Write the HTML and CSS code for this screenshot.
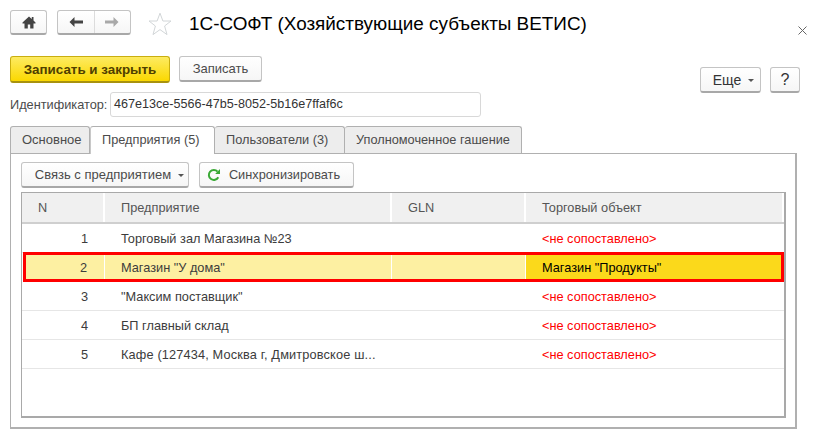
FILE: index.html
```html
<!DOCTYPE html>
<html lang="ru">
<head>
<meta charset="utf-8">
<title>1С-СОФТ</title>
<link rel="stylesheet" href="styles.css">
</head>
<body>
<div class="window">
  <header class="top">
    <button class="btn nav home" aria-label="Домой">
      <svg width="14" height="13" viewBox="0 0 14 13"><path d="M7 0.5 0.5 6.5V7.5H2.5V12.5H5.8V8.5H8.2V12.5H11.5V7.5H13.5V6.5L11.5 4.6V1H9.8V3L7 0.5Z" fill="#444"/></svg>
    </button>
    <div class="btn nav pair">
      <span class="seg"><svg width="14" height="10" viewBox="0 0 14 10"><path d="M5.5 0 0.5 5 5.5 10V6.5H14V3.5H5.5Z" fill="#444"/></svg></span>
      <span class="seg last"><svg width="14" height="10" viewBox="0 0 14 10"><path d="M8.5 0 13.5 5 8.5 10V6.5H0V3.5H8.5Z" fill="#a9a9a9"/></svg></span>
    </div>
    <svg class="star" width="24" height="24" viewBox="0 0 24 24"><path d="M12 1.2 14.9 9H23L16.6 14 19 22.6 12 17.6 5 22.6 7.4 14 1 9H9.1Z" fill="#fff" stroke="#d2d6d8" stroke-width="1"/></svg>
    <h1 class="title">1С-СОФТ (Хозяйствующие субъекты ВЕТИС)</h1>
    <svg class="close" width="9" height="9" viewBox="0 0 9 9"><path d="M.5.5 8.5 8.5M8.5.5.5 8.5" stroke="#666" stroke-width="1" fill="none"/></svg>
  </header>

  <div class="commands">
    <button class="btn primary">Записать и закрыть</button>
    <button class="btn save">Записать</button>
    <div class="cmd-right">
      <button class="btn more">Еще<i class="caret"></i></button>
      <button class="btn help">?</button>
    </div>
  </div>

  <div class="field">
    <label class="field-label">Идентификатор:</label>
    <div class="input">467e13ce-5566-47b5-8052-5b16e7ffaf6c</div>
  </div>

  <nav class="tabs">
    <div class="tab t1">Основное</div>
    <div class="tab t2 active">Предприятия (5)</div>
    <div class="tab t3">Пользователи (3)</div>
    <div class="tab t4">Уполномоченное гашение</div>
  </nav>

  <section class="panel">
    <div class="toolbar">
      <button class="btn link">Связь с предприятием<i class="caret"></i></button>
      <button class="btn sync">
        <svg width="14" height="14" viewBox="0 0 14 14"><path d="M11.3 9.2A5 5 0 1 1 10.6 3.6" fill="none" stroke="#3aa935" stroke-width="2"/><path d="M8.2 5.9H13V1Z" fill="#3aa935"/></svg>
        Синхронизировать
      </button>
    </div>
    <div class="table">
      <div class="row head">
        <div class="c c-n">N</div>
        <div class="c c-name">Предприятие</div>
        <div class="c c-gln">GLN</div>
        <div class="c c-obj">Торговый объект</div>
      </div>
      <div class="row">
        <div class="c c-n">1</div>
        <div class="c c-name">Торговый зал Магазина №23</div>
        <div class="c c-gln"></div>
        <div class="c c-obj none">&lt;не сопоставлено&gt;</div>
      </div>
      <div class="row selected">
        <div class="c c-n">2</div>
        <div class="c c-name">Магазин "У дома"</div>
        <div class="c c-gln"></div>
        <div class="c c-obj">Магазин "Продукты"</div>
      </div>
      <div class="row">
        <div class="c c-n">3</div>
        <div class="c c-name">"Максим поставщик"</div>
        <div class="c c-gln"></div>
        <div class="c c-obj none">&lt;не сопоставлено&gt;</div>
      </div>
      <div class="row">
        <div class="c c-n">4</div>
        <div class="c c-name">БП главный склад</div>
        <div class="c c-gln"></div>
        <div class="c c-obj none">&lt;не сопоставлено&gt;</div>
      </div>
      <div class="row">
        <div class="c c-n">5</div>
        <div class="c c-name long">Кафе (127434, Москва г, Дмитровское ш...</div>
        <div class="c c-gln"></div>
        <div class="c c-obj none">&lt;не сопоставлено&gt;</div>
      </div>
    </div>
  </section>
</div>
</body>
</html>
```
FILE: styles.css
```css
* { box-sizing: border-box; }
html, body { margin: 0; padding: 0; background: #fff; }
body { font: 12.75px "Liberation Sans", Arial, sans-serif; color: #4b4b4b; overflow: hidden; }
.window { width: 817px; height: 447px; padding: 10px 17px 0 10px; }

.btn {
  font: inherit; color: #4b4b4b; padding: 0; margin: 0;
  display: flex; align-items: center; justify-content: center;
  background: linear-gradient(#fff, #f6f6f6);
  border: 1px solid #c4c4c4; border-bottom: 2px solid #a8a8a8; border-radius: 3px;
}

.top { display: flex; align-items: flex-start; height: 46px; }
.nav { height: 25px; }
.home { width: 37px; }
.pair { width: 74px; margin-left: 10px; }
.seg { flex: 1; height: 100%; display: flex; align-items: center; justify-content: center; }
.seg.last { border-left: 1px solid #dcdcdc; }
.star { margin: 2px 0 0 17px; }
.title { font: 400 18.9px "Liberation Sans", Arial, sans-serif; color: #000; margin: 1px 0 0 17px; line-height: 26px; flex: 1; white-space: nowrap; }
.close { margin: 16px -7px 0 0; }

.commands { display: flex; align-items: flex-start; height: 36px; }
.primary { width: 160px; height: 27px; font-weight: 700; font-size: 13.4px; color: #4f3f00; background: linear-gradient(#fdeb62, #fbd800); border-color: #c9ae10; border-bottom-color: #a8920e; }
.save { width: 83px; height: 26px; margin-left: 9px; font-size: 13px; }
.cmd-right { display: flex; gap: 9px; margin-left: auto; margin-top: 11px; }
.more { width: 61px; height: 26px; color: #333; font-size: 14px; padding-left: 6px; }
.help { width: 30px; height: 26px; color: #333; font-size: 16px; }
.caret { width: 0; height: 0; border: 3px solid transparent; border-top-color: #555; border-bottom: 0; margin-left: 7px; margin-top: 1px; }

.field { display: flex; align-items: center; height: 25px; }
.field-label { width: 100px; color: #4b4b4b; }
.input { width: 371px; height: 25px; border: 1px solid #d8d8d8; border-radius: 3px; padding: 0 3px; line-height: 23px; color: #333; font-size: 12.6px; }

.tabs { display: flex; margin-top: 9px; height: 28px; position: relative; z-index: 1; }
.tab { height: 27px; line-height: 26px; padding-left: 11px; white-space: nowrap; background: #ededed; border: 1px solid #b0b0b0; border-bottom: 0; border-left: 0; border-radius: 3px 3px 0 0; }
.t1 { width: 80px; border-left: 1px solid #b0b0b0; font-size: 13px; }
.t2 { width: 125px; height: 28px; background: #fff; border-left: 1px solid #c8c8c8; }
.t3 { width: 130px; }
.t4 { width: 177px; }

.panel { width: 787px; height: 276px; margin-top: -1px; border: 1px solid #b0b0b0; border-width: 1px 2px 2px 1px; padding: 8px 10px 0 10px; }
.toolbar { display: flex; gap: 10px; height: 30px; }
.link { width: 168px; height: 26px; font-size: 13px; padding-left: 9px; }
.sync { width: 155px; height: 26px; gap: 8px; padding-right: 6px; }
.table { width: 765px; height: 226px; border: 1px solid #a9a9a9; border-width: 1px 2px 2px 1px; }

.row { display: flex; height: 29px; border-bottom: 1px solid #e6e6e6; align-items: stretch; }
.c { padding-left: 16px; line-height: 30px; white-space: nowrap; overflow: hidden; color: #3c3c3c; }
.c-n { width: 83px; padding: 0 17px 0 0; text-align: right; }
.c-name { width: 287px; }
.c-gln { width: 134px; }
.c-obj { width: 258px; }
.long { letter-spacing: .15px; }
.head { height: 31px; border-bottom: 2px solid #cfcfcf; }
.head .c { background: #f0f0f0; color: #555; border-right: 2px solid #fff; }
.head .c-n { text-align: left; padding-left: 16px; }
.none { color: #f00; }
.selected { margin-top: -1px; height: 30px; background: #fdf0a2; outline: 3px solid #f00; outline-offset: -3px; margin-left: 1px; border: 0; }
.selected .c { line-height: 32px; border-right: 1px solid #fff; }
.selected .c-n { width: 82px; }
.selected .c-obj { background: #fbd91b; color: #000; border-right: 0; flex: 1; }
```
